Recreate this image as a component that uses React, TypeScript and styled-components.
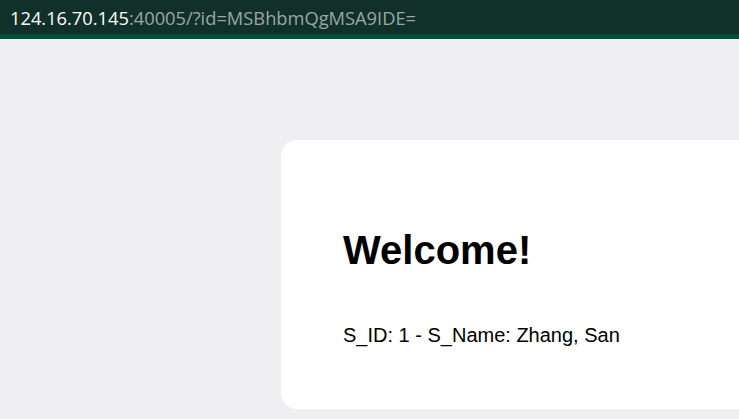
import React from "react";
import styled, { createGlobalStyle } from "styled-components";

const Global = createGlobalStyle`
  html, body { margin: 0; padding: 0; background: #efeff1; overflow: hidden; }
  body { font-family: "Liberation Sans", Arial, sans-serif; }
`;

const Page = styled.div`
  width: 739px;
  height: 419px;
  display: flex;
  flex-direction: column;
  background: #efeff1;
  overflow: hidden;
`;

const AddressBar = styled.div`
  height: 34px;
  background: #11302a;
  border-bottom: 5px solid #0b4a36;
  display: flex;
  align-items: center;
  padding-left: 10px;
  font-family: "Open Sans", "Liberation Sans", sans-serif;
  font-size: 18.3px;
  white-space: nowrap;
`;

const Host = styled.span`
  color: #ffffff;
`;

const Rest = styled.span`
  color: #9aa7a2;
`;

const Content = styled.div`
  flex: 1;
  display: flex;
  padding: 101px 0 0 281px;
`;

const Card = styled.div`
  width: 600px;
  flex-shrink: 0;
  height: 269px;
  background: #ffffff;
  border-radius: 16px;
  padding: 84px 0 0 62px;
  box-sizing: border-box;
`;

const Title = styled.h1`
  margin: 0;
  font-family: "Liberation Sans", Arial, sans-serif;
  font-weight: bold;
  font-size: 40px;
  line-height: 52px;
  color: #000;
`;

const Info = styled.p`
  margin: 47px 0 0;
  font-family: "Liberation Sans", Arial, sans-serif;
  font-size: 20px;
  line-height: 24px;
  color: #000;
`;

export default function App() {
  return (
    <>
      <Global />
      <Page>
        <AddressBar>
          <Host>124.16.70.145</Host>
          <Rest>:40005/?id=MSBhbmQgMSA9IDE=</Rest>
        </AddressBar>
        <Content>
          <Card>
            <Title>Welcome!</Title>
            <Info>S_ID: 1 - S_Name: Zhang, San</Info>
          </Card>
        </Content>
      </Page>
    </>
  );
}
